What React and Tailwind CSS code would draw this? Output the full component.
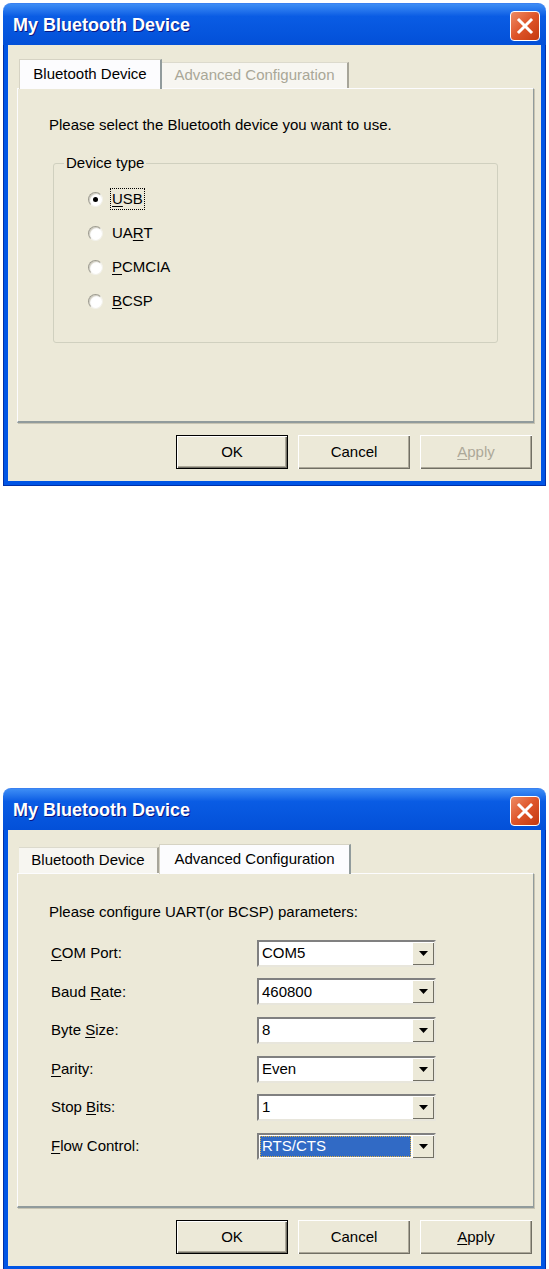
import React from 'react';

const U = ({ children }) => <span className="underline underline-offset-2">{children}</span>;

function TitleBar() {
  return (
    <div className="h-[42px] flex items-center justify-between rounded-t-[8px] bg-gradient-to-b from-[#3D8DF5] via-[#0A5CE4] via-30% to-[#0350D8] border-t border-[#3A80F0]">
      <span className="pl-[10px] pt-[2px] text-[18px] font-bold text-white [text-shadow:1px_1px_0_#0A1883] font-['Liberation_Sans',Arial,sans-serif]">
        My Bluetooth Device
      </span>
      <div className="mr-[6px] mt-[2px] w-[30px] h-[30px] rounded-[4px] border border-white bg-gradient-to-br from-[#ED8A62] via-[#DE5428] to-[#C4390E] flex items-center justify-center">
        <svg width="18" height="18" viewBox="0 0 18 18">
          <path d="M3 3 L15 15 M15 3 L3 15" stroke="white" strokeWidth="3" strokeLinecap="square" />
        </svg>
      </div>
    </div>
  );
}

function Tab({ label, active, width, dim }) {
  if (active) {
    return (
      <div
        className={`${width} h-[30px] -mb-px z-10 flex items-center justify-center bg-[#FCFCFE] border-t border-l border-[#D6D3C4] border-r-2 border-r-[#919B9C] text-black text-[15px]`}
      >
        {label}
      </div>
    );
  }
  return (
    <div
      className={`${width} h-[26px] flex items-center justify-center bg-[#F7F6F1] border-t border-[#DCDACD] border-r-2 border-r-[#A7A599] text-[15px] ${
        dim ? 'text-[#A9A797]' : 'text-black'
      }`}
    >
      {label}
    </div>
  );
}

function Button({ children, def, disabled }) {
  return (
    <div
      className={`w-[112px] h-[34px] flex items-center justify-center text-[15px] bg-[#ECE9D8] ${
        def
          ? 'border border-black shadow-[inset_1px_1px_0_#fff,inset_-1px_-1px_0_#716F64,inset_-2px_-2px_0_#ACA899]'
          : 'shadow-[inset_1px_1px_0_#fff,inset_-1px_-1px_0_#716F64,inset_-2px_-2px_0_#ACA899]'
      } ${disabled ? 'text-[#ACA899]' : 'text-black'}`}
    >
      {children}
    </div>
  );
}

function Buttons({ applyDisabled }) {
  return (
    <div className="flex justify-end gap-[10px] mr-[9px]">
      <Button def>OK</Button>
      <Button>Cancel</Button>
      <Button disabled={applyDisabled}>
        <U>A</U>pply
      </Button>
    </div>
  );
}

function Radio({ checked, children }) {
  return (
    <div className="h-[34px] flex items-center">
      <span className="w-[15px] h-[15px] rounded-full bg-white border border-t-[#9E9C90] border-l-[#9E9C90] border-r-[#F2F1EA] border-b-[#F2F1EA] shadow-[inset_1px_1px_1px_#CFCCBF] flex items-center justify-center">
        {checked && <span className="w-[5px] h-[5px] rounded-full bg-black" />}
      </span>
      <span
        className={`ml-[8px] px-[1px] leading-[20px] text-[15px] ${
          checked ? 'outline outline-1 outline-dotted outline-black' : ''
        }`}
      >
        {children}
      </span>
    </div>
  );
}

function Combo({ value, selected }) {
  return (
    <div className="w-[179px] h-[27px] flex bg-white border-2 border-t-[#808080] border-l-[#808080] border-r-[#E8E6DC] border-b-[#E8E6DC]">
      <div className="flex-1 flex items-center p-[1px]">
        <span
          className={`h-full w-full flex items-center pl-[2px] text-[15px] ${
            selected ? 'bg-[#316AC5] text-white outline outline-1 outline-dotted outline-[#E0B040] -outline-offset-1' : 'text-black'
          }`}
        >
          {value}
        </span>
      </div>
      <div className="w-[22px] bg-[#ECE9D8] shadow-[inset_1px_1px_0_#fff,inset_-1px_-1px_0_#716F64] flex items-center justify-center">
        <svg width="9" height="5" viewBox="0 0 9 5">
          <path d="M0 0 H9 L4.5 5 Z" fill="black" />
        </svg>
      </div>
    </div>
  );
}

function Dialog({ tab, children, applyDisabled }) {
  return (
    <div className="w-[543px] ml-[3px] flex flex-col">
      <TitleBar />
      <div className="bg-[#0055E5] px-[4px] pb-[4px] border-x border-b border-[#0031A8]">
        <div className="bg-[#ECE9D8] pt-[14px] pb-[12px]">
          <div className="flex items-end ml-[11px]">
            {tab === 0 ? (
              <>
                <Tab label="Bluetooth Device" active width="w-[143px]" />
                <Tab label="Advanced Configuration" dim width="w-[187px]" />
              </>
            ) : (
              <>
                <Tab label="Bluetooth Device" width="w-[140px]" />
                <Tab label="Advanced Configuration" active width="w-[192px]" />
              </>
            )}
          </div>
          <div className="ml-[9px] w-[517px] h-[335px] bg-[#ECE9D8] border-t border-l border-[#FCFCFE] border-r border-b-2 border-r-[#919B9C] border-b-[#919B9C] shadow-[1px_1px_0_#C7C4B3]">
            {children}
          </div>
          <div className="mt-[12px]">
            <Buttons applyDisabled={applyDisabled} />
          </div>
        </div>
      </div>
    </div>
  );
}

export default function App() {
  const rows = [
    [<><U>C</U>OM Port:</>, 'COM5'],
    [<>Baud <U>R</U>ate:</>, '460800'],
    [<>Byte <U>S</U>ize:</>, '8'],
    [<><U>P</U>arity:</>, 'Even'],
    [<>Stop <U>B</U>its:</>, '1'],
    [<><U>F</U>low Control:</>, 'RTS/CTS', true],
  ];

  return (
    <div className="w-[549px] min-h-[1269px] bg-white pt-[3px] font-['Liberation_Sans',Arial,sans-serif] text-black">
      <Dialog tab={0} applyDisabled>
        <div className="pl-[31px] pt-[27px] text-[15px] leading-[18px]">
          Please select the Bluetooth device you want to use.
        </div>
        <fieldset className="ml-[35px] mt-[20px] w-[445px] h-[189px] border border-[#D0D0BF] rounded-[3px] pl-[34px] pt-[10px]">
          <legend className="ml-[-24px] px-[2px] text-[15px] leading-[18px]">Device type</legend>
          <Radio checked>
            <U>U</U>SB
          </Radio>
          <Radio>
            UA<U>R</U>T
          </Radio>
          <Radio>
            <U>P</U>CMCIA
          </Radio>
          <Radio>
            <U>B</U>CSP
          </Radio>
        </fieldset>
      </Dialog>

      <div className="h-[302px]" />

      <Dialog tab={1}>
        <div className="pl-[31px] pt-[29px] text-[15px] leading-[18px]">
          Please configure UART(or BCSP) parameters:
        </div>
        <div className="mt-[13px] pl-[33px] flex flex-col">
          {rows.map(([label, value, sel], i) => (
            <div key={i} className="h-[38.6px] flex items-center">
              <span className="w-[206px] text-[15px]">{label}</span>
              <Combo value={value} selected={sel} />
            </div>
          ))}
        </div>
      </Dialog>
    </div>
  );
}
